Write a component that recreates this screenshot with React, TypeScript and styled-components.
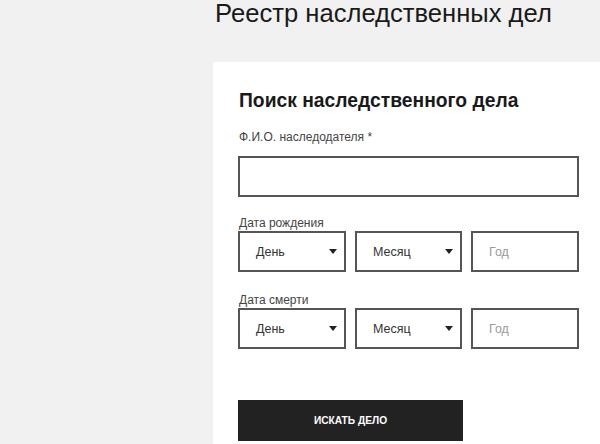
import React from "react";
import styled, { createGlobalStyle } from "styled-components";

const Global = createGlobalStyle`
  html, body { margin: 0; padding: 0; }
  body {
    background: #f1f1f1;
    font-family: "Liberation Sans", Arial, sans-serif;
    color: #222;
  }
  * { box-sizing: border-box; }
`;

const Page = styled.div`
  display: grid;
  grid-template-columns: 213px 1fr;
  min-height: 444px;
`;

const Main = styled.div`
  display: flex;
  flex-direction: column;
`;

const PageTitle = styled.h1`
  margin: 0;
  height: 62px;
  padding: 0 0 0 2px;
  font-size: 25.6px;
  line-height: 27px;
  font-weight: 400;
  color: #1a1a1a;
  white-space: nowrap;
`;

const Panel = styled.div`
  flex: 1;
  background: #fff;
  padding: 28px 21px 0 25px;
`;

const Heading = styled.h2`
  margin: 0 0 18px 1px;
  font-size: 19.3px;
  line-height: 22px;
  font-weight: 700;
  color: #1a1a1a;
`;

const Label = styled.div<{ $gap?: number }>`
  font-size: 12px;
  line-height: 14px;
  color: #444;
  margin: 0 0 ${(p) => p.$gap ?? 1}px 1px;
`;

const TextInput = styled.div`
  height: 41px;
  border: 2px solid #555;
`;

const Group = styled.div<{ $top: number }>`
  margin-top: ${(p) => p.$top}px;
`;

const DateRow = styled.div`
  display: grid;
  grid-template-columns: 108px 107px 108px;
  gap: 9px;
`;

const Box = styled.div`
  height: 41px;
  border: 2px solid #555;
  display: flex;
  align-items: center;
  justify-content: space-between;
  padding: 0 7px 0 16px;
  font-size: 12.5px;
  color: #333;
`;

const Placeholder = styled.span`
  color: #9a9a9a;
`;

const Arrow = styled.svg`
  width: 8px;
  height: 5px;
  display: block;
`;

const Button = styled.button`
  margin-top: 51px;
  width: 225px;
  height: 41px;
  border: none;
  background: #222;
  color: #fff;
  font-family: "Liberation Sans", Arial, sans-serif;
  font-weight: 700;
  font-size: 10.2px;
  display: block;
  padding: 0;
`;

const Caret = () => (
  <Arrow viewBox="0 0 8 5">
    <path d="M0 0h8L4 5z" fill="#222" />
  </Arrow>
);

const DateFields = () => (
  <DateRow>
    <Box>
      <span>День</span>
      <Caret />
    </Box>
    <Box>
      <span>Месяц</span>
      <Caret />
    </Box>
    <Box>
      <Placeholder>Год</Placeholder>
    </Box>
  </DateRow>
);

export default function App() {
  return (
    <>
      <Global />
      <Page>
        <div />
        <Main>
          <PageTitle>Реестр наследственных дел</PageTitle>
          <Panel>
            <Heading>Поиск наследственного дела</Heading>
            <Label $gap={12}>Ф.И.О. наследодателя *</Label>
            <TextInput />
            <Group $top={19}>
              <Label>Дата рождения</Label>
              <DateFields />
            </Group>
            <Group $top={21}>
              <Label>Дата смерти</Label>
              <DateFields />
            </Group>
            <Button>ИСКАТЬ ДЕЛО</Button>
          </Panel>
        </Main>
      </Page>
    </>
  );
}
